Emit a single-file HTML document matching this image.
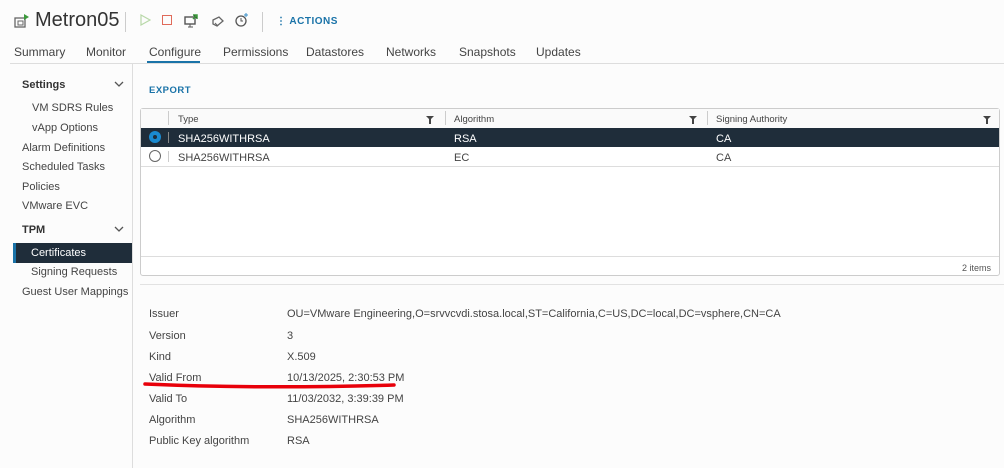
<!DOCTYPE html><html><head><style>
body{margin:0;width:1004px;height:468px;background:#fff;font-family:"Liberation Sans",sans-serif;color:#333;position:relative;overflow:hidden}
.a{position:absolute;white-space:nowrap}
.t{font-size:11px;color:#444}
.th{font-size:9.5px;color:#444}
.f{position:absolute;width:8px;height:8px}
</style></head><body>
<div class="a" style="left:0;top:0;width:1004px;height:468px;background:#fcfcfc"></div>
<svg class="a" style="left:13px;top:12px" width="18" height="18" viewBox="0 0 18 18"><rect x="2" y="6" width="10" height="9" fill="none" stroke="#666" stroke-width="1.3"/><rect x="5" y="9" width="5" height="4" fill="none" stroke="#666"/><path d="M11 2v6l5-3z" fill="#3c9a3c"/></svg>
<div class="a" style="left:35px;top:9px;font-size:20px;color:#333">Metron05</div>
<div class="a" style="left:125px;top:12px;width:1px;height:20px;background:#ccc"></div>
<svg class="a" style="left:139px;top:14px" width="12" height="12"><path d="M2 1l9 5-9 5z" fill="none" stroke="#b8d8a8" stroke-width="1.2"/></svg>
<div class="a" style="left:162px;top:15px;width:8px;height:8px;border:1.3px solid #e06a5a"></div>
<svg class="a" style="left:183px;top:13px" width="16" height="16"><rect x="2" y="4" width="10" height="7" fill="none" stroke="#555" stroke-width="1.4"/><path d="M5 14h5M7 11v3" stroke="#555"/><path d="M10 2l4 0 0 4M14 2l-4 4" stroke="#3c9a3c" stroke-width="1.5"/></svg>
<svg class="a" style="left:210px;top:14px" width="16" height="16"><path d="M3 6l6-3 4 4-6 5-4-2z" fill="none" stroke="#666" stroke-width="1.3"/><path d="M5 9l3 3" stroke="#666"/></svg>
<svg class="a" style="left:234px;top:12px" width="16" height="16"><circle cx="7" cy="9" r="5" fill="none" stroke="#555" stroke-width="1.3"/><path d="M7 6v3h2" stroke="#555" fill="none"/><path d="M12 1v4M10 3h4" stroke="#3a8fc8"/></svg>
<div class="a" style="left:262px;top:12px;width:1px;height:20px;background:#ccc"></div>
<div class="a" style="left:276px;top:16px;font-size:10px;font-weight:bold;color:#1a73a8;letter-spacing:0.5px">⋮ ACTIONS</div>
<div class="a" style="left:14px;top:45px;font-size:12px;color:#444">Summary</div>
<div class="a" style="left:86px;top:45px;font-size:12px;color:#444">Monitor</div>
<div class="a" style="left:149px;top:45px;font-size:12px;color:#444">Configure</div>
<div class="a" style="left:147px;top:61px;width:53px;height:3px;background:#1a73a8"></div>
<div class="a" style="left:223px;top:45px;font-size:12px;color:#444">Permissions</div>
<div class="a" style="left:306px;top:45px;font-size:12px;color:#444">Datastores</div>
<div class="a" style="left:386px;top:45px;font-size:12px;color:#444">Networks</div>
<div class="a" style="left:459px;top:45px;font-size:12px;color:#444">Snapshots</div>
<div class="a" style="left:536px;top:45px;font-size:12px;color:#444">Updates</div>
<div class="a" style="left:10px;top:63px;width:994px;height:1px;background:#ddd"></div>
<div class="a" style="left:132px;top:64px;width:1px;height:404px;background:#ddd"></div>
<div class="a" style="left:22px;top:79px;font-size:11px;font-weight:bold;color:#333">Settings</div>
<svg class="a" style="left:113px;top:80px" width="12" height="8"><path d="M2 2l4 4 4-4" stroke="#555" stroke-width="1.3" fill="none"/></svg>
<div class="a t" style="left:32px;top:102px">VM SDRS Rules</div>
<div class="a t" style="left:32px;top:122px">vApp Options</div>
<div class="a t" style="left:22px;top:142px">Alarm Definitions</div>
<div class="a t" style="left:22px;top:161px">Scheduled Tasks</div>
<div class="a t" style="left:22px;top:181px">Policies</div>
<div class="a t" style="left:22px;top:200px">VMware EVC</div>
<div class="a" style="left:22px;top:224px;font-size:11px;font-weight:bold;color:#333">TPM</div>
<svg class="a" style="left:113px;top:225px" width="12" height="8"><path d="M2 2l4 4 4-4" stroke="#555" stroke-width="1.3" fill="none"/></svg>
<div class="a" style="left:13px;top:243px;width:119px;height:20px;background:#1f2d3a;border-left:3px solid #1a73a8;box-sizing:border-box"></div>
<div class="a" style="left:31px;top:247px;font-size:11px;color:#fff">Certificates</div>
<div class="a t" style="left:31px;top:266px">Signing Requests</div>
<div class="a t" style="left:22px;top:286px">Guest User Mappings</div>
<div class="a" style="left:149px;top:85px;font-size:9.5px;font-weight:bold;color:#1a73a8;letter-spacing:0.5px">EXPORT</div>
<div class="a" style="left:140px;top:108px;width:860px;height:168px;border:1px solid #ccc;border-radius:3px;background:#fff;box-sizing:border-box"></div>
<div class="a" style="left:141px;top:109px;width:858px;height:19px;background:#fafafa;border-bottom:1px solid #ccc"></div>
<div class="a" style="left:168px;top:111px;width:1px;height:14px;background:#ccc"></div>
<div class="a" style="left:445px;top:111px;width:1px;height:14px;background:#ccc"></div>
<div class="a" style="left:707px;top:111px;width:1px;height:14px;background:#ccc"></div>
<div class="a th" style="left:178px;top:114px">Type</div>
<svg class="f" style="left:426px;top:116px"><path d="M0 0h8L5 3v5H3V3z" fill="#444"/></svg>
<div class="a th" style="left:454px;top:114px">Algorithm</div>
<svg class="f" style="left:689px;top:116px"><path d="M0 0h8L5 3v5H3V3z" fill="#444"/></svg>
<div class="a th" style="left:716px;top:114px">Signing Authority</div>
<svg class="f" style="left:983px;top:116px"><path d="M0 0h8L5 3v5H3V3z" fill="#444"/></svg>
<div class="a" style="left:141px;top:128px;width:858px;height:19px;background:#1f2d3a"></div>
<div class="a" style="left:149px;top:131px;width:12px;height:12px;border-radius:50%;background:#1a8ad0"></div>
<div class="a" style="left:153px;top:135px;width:4px;height:4px;border-radius:50%;background:#1f2d3a"></div>
<div class="a" style="left:168px;top:132px;width:1px;height:11px;background:#888"></div>
<div class="a" style="left:178px;top:133px;font-size:11px;color:#fff">SHA256WITHRSA</div>
<div class="a" style="left:454px;top:133px;font-size:11px;color:#fff">RSA</div>
<div class="a" style="left:716px;top:133px;font-size:11px;color:#fff">CA</div>
<div class="a" style="left:149px;top:150px;width:10px;height:10px;border-radius:50%;border:1px solid #666"></div>
<div class="a" style="left:168px;top:151px;width:1px;height:11px;background:#ccc"></div>
<div class="a t" style="left:178px;top:152px">SHA256WITHRSA</div>
<div class="a t" style="left:454px;top:152px">EC</div>
<div class="a t" style="left:716px;top:152px">CA</div>
<div class="a" style="left:141px;top:166px;width:858px;height:1px;background:#ddd"></div>
<div class="a" style="left:141px;top:256px;width:858px;height:1px;background:#ddd"></div>
<div class="a" style="left:962px;top:263px;font-size:9px;color:#555">2 items</div>
<div class="a" style="left:140px;top:284px;width:864px;height:1px;background:#e2e2e2"></div>
<div class="a t" style="left:149px;top:308px">Issuer</div>
<div class="a t" style="left:287px;top:308px">OU=VMware Engineering,O=srvvcvdi.stosa.local,ST=California,C=US,DC=local,DC=vsphere,CN=CA</div>
<div class="a t" style="left:149px;top:330px">Version</div><div class="a t" style="left:287px;top:330px">3</div>
<div class="a t" style="left:149px;top:351px">Kind</div><div class="a t" style="left:287px;top:351px">X.509</div>
<div class="a t" style="left:149px;top:372px">Valid From</div><div class="a t" style="left:287px;top:372px">10/13/2025, 2:30:53 PM</div>
<svg class="a" style="left:140px;top:380px" width="262" height="12"><path d="M5 4Q120 9 254 5" stroke="#e8000a" stroke-width="3.5" fill="none" stroke-linecap="round"/></svg>
<div class="a t" style="left:149px;top:393px">Valid To</div><div class="a t" style="left:287px;top:393px">11/03/2032, 3:39:39 PM</div>
<div class="a t" style="left:149px;top:414px">Algorithm</div><div class="a t" style="left:287px;top:414px">SHA256WITHRSA</div>
<div class="a t" style="left:149px;top:435px">Public Key algorithm</div><div class="a t" style="left:287px;top:435px">RSA</div>
</body></html>
